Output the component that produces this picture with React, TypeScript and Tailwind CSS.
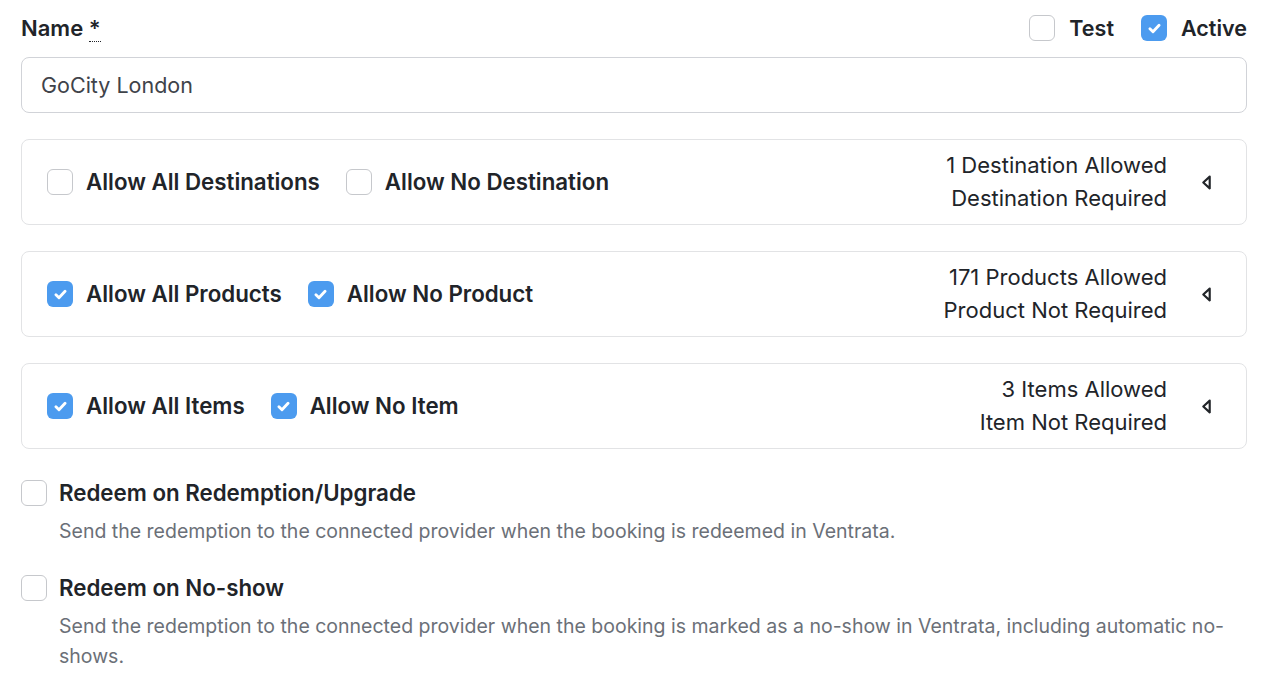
import { useState } from 'react';

type BoxProps = { checked: boolean; onChange?: () => void };

function Box({ checked, onChange }: BoxProps) {
  return (
    <button
      type="button"
      onClick={onChange}
      className={
        checked
          ? 'flex h-[26px] w-[26px] shrink-0 items-center justify-center rounded-[6px] bg-[#4c9bef]'
          : 'flex h-[26px] w-[26px] shrink-0 items-center justify-center rounded-[6px] border border-[#c6c8cc] bg-white'
      }
    >
      {checked && (
        <svg width="13" height="11" viewBox="0 0 12 10" fill="none">
          <path d="M1.8 5.2 4.6 8 10.2 2" stroke="white" strokeWidth={2.6} strokeLinecap="round" strokeLinejoin="round" />
        </svg>
      )}
    </button>
  );
}

function Caret() {
  return (
    <svg width="11" height="15" viewBox="0 0 10 14" fill="none">
      <path d="M8 1.5 2 7l6 5.5z" stroke="#222529" strokeWidth={2} strokeLinejoin="round" />
    </svg>
  );
}

type Rule = {
  all: string;
  none: string;
  allOn: boolean;
  noneOn: boolean;
  count: string;
  req: string;
};

const rules: Rule[] = [
  { all: 'Allow All Destinations', none: 'Allow No Destination', allOn: false, noneOn: false, count: '1 Destination Allowed', req: 'Destination Required' },
  { all: 'Allow All Products', none: 'Allow No Product', allOn: true, noneOn: true, count: '171 Products Allowed', req: 'Product Not Required' },
  { all: 'Allow All Items', none: 'Allow No Item', allOn: true, noneOn: true, count: '3 Items Allowed', req: 'Item Not Required' },
];

export default function App() {
  const [test, setTest] = useState(false);
  const [active, setActive] = useState(true);
  const [name, setName] = useState('GoCity London');

  return (
    <div className="min-h-screen bg-white px-[21px] pt-[10px] pr-[23px] font-['Inter',sans-serif] text-[#212429]">
      <div className="flex h-[36px] items-center justify-between">
        <label className="text-[22px] font-semibold">
          Name <abbr title="required" className="no-underline border-b border-dotted border-[#212429]">*</abbr>
        </label>
        <div className="flex items-center">
          <Box checked={test} onChange={() => setTest(!test)} />
          <span className="ml-[14px] text-[21.5px] font-semibold">Test</span>
          <div className="ml-[27px]">
            <Box checked={active} onChange={() => setActive(!active)} />
          </div>
          <span className="ml-[14px] text-[21.5px] font-semibold">Active</span>
        </div>
      </div>

      <input
        value={name}
        onChange={(e) => setName(e.target.value)}
        className="mt-[11px] block h-[56px] w-full rounded-[8px] border border-[#d1d3d8] px-[19px] text-[21.5px] text-[#3f434a] outline-none"
      />

      <div className="mt-[26px] flex flex-col gap-[26px]">
        {rules.map((r) => (
          <div key={r.all} className="flex h-[86px] items-center rounded-[8px] border border-[#e2e3e5] pl-[25px] pr-[34px]">
            <div className="flex items-center">
              <Box checked={r.allOn} />
              <span className="ml-[13px] text-[22.3px] font-semibold">{r.all}</span>
            </div>
            <div className="ml-[26px] flex items-center">
              <Box checked={r.noneOn} />
              <span className="ml-[13px] text-[22.3px] font-semibold">{r.none}</span>
            </div>
            <div className="ml-auto text-right text-[22px] leading-[33px]">
              <div>{r.count}</div>
              <div>{r.req}</div>
            </div>
            <div className="ml-[34px] flex items-center">
              <Caret />
            </div>
          </div>
        ))}
      </div>

      <div className="mt-[31px] flex items-start">
        <Box checked={false} />
        <div className="ml-[12px]">
          <div className="text-[22.3px] font-semibold leading-[26px]">Redeem on Redemption/Upgrade</div>
          <p className="mt-[10px] text-[19.5px] leading-[30px] text-[#6b7078]">
            Send the redemption to the connected provider when the booking is redeemed in Ventrata.
          </p>
        </div>
      </div>

      <div className="mt-[29px] flex items-start">
        <Box checked={false} />
        <div className="ml-[12px]">
          <div className="text-[22.3px] font-semibold leading-[26px]">Redeem on No-show</div>
          <p className="mt-[10px] text-[19.5px] leading-[30px] text-[#6b7078]">
            Send the redemption to the connected provider when the booking is marked as a no-show in Ventrata, including automatic no-shows.
          </p>
        </div>
      </div>
    </div>
  );
}
